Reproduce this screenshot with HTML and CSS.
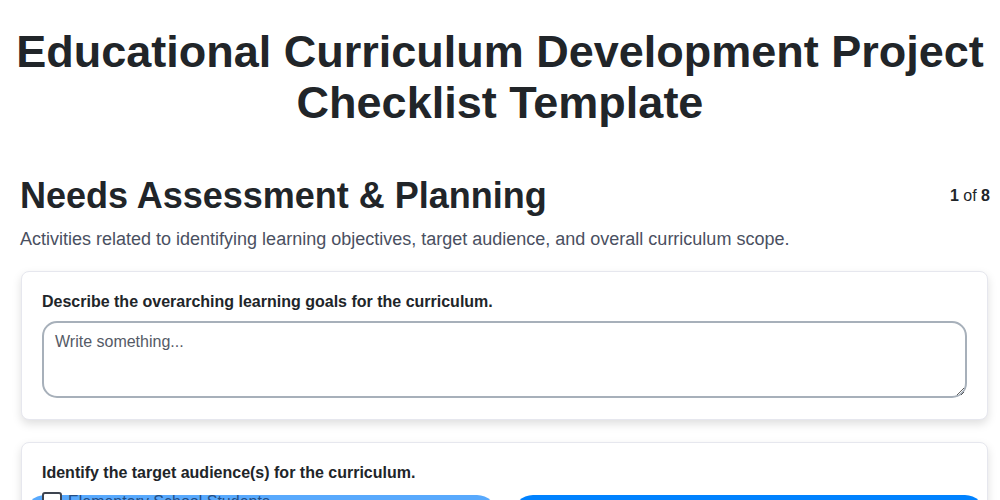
FILE: index.html
```html
<!DOCTYPE html>
<html>
<head>
	<meta charset="utf-8">
	<title>Educational Curriculum Development Project Checklist Template</title>
	<link rel="stylesheet" href="styles.css">
</head>
<body>
	<h1 class="title">Educational Curriculum Development Project Checklist Template</h1>
	<main class="page">
		<div class="section-head">
			<h2>Needs Assessment &amp; Planning</h2>
			<span class="counter"><b>1</b> of <b>8</b></span>
		</div>
		<p class="section-desc">Activities related to identifying learning objectives, target audience, and overall curriculum scope.</p>

		<div class="card">
			<label class="question">Describe the overarching learning goals for the curriculum.</label>
			<textarea placeholder="Write something..."></textarea>
		</div>

		<div class="card">
			<label class="question">Identify the target audience(s) for the curriculum.</label>
			<div class="options">
				<div class="option light">
					<label class="check"><span class="box"></span>Elementary School Students</label>
				</div>
				<div class="option dark"></div>
			</div>
		</div>
	</main>
</body>
</html>
```

FILE: styles.css
```css
body{
	margin: 0;
	background-color: #fff;
	color: #212529;
	font-family: "Liberation Sans", Arial, sans-serif;
}
.title{
	margin: 0;
	padding: 26px 10px 0;
	font-size: 45px;
	line-height: 51px;
	text-align: center;
	font-weight: bold;
}
.page{
	padding: 46px 10px 0 20px;
}
.section-head{
	display: flex;
	align-items: center;
	justify-content: space-between;
}
.section-head h2{
	margin: 0;
	font-size: 36px;
	line-height: 44px;
}
.counter{
	font-size: 16px;
	color: #212529;
}
.section-desc{
	margin: 11px 0 21px;
	font-size: 18px;
	color: #4a5061;
}
.card{
	margin: 0 2px 22px 1px;
	padding: 20px 20px 21px;
	background: #fff;
	border: 1px solid #e6e7ee;
	border-radius: 8px;
	box-shadow: 0 4px 10px rgba(0,0,0,.13);
}
.question{
	display: block;
	font-size: 16px;
	font-weight: bold;
	line-height: 19px;
}
textarea{
	display: block;
	box-sizing: border-box;
	width: 100%;
	height: 77px;
	margin-top: 10px;
	padding: 10px 11px;
	border: 2px solid #a7b0ba;
	border-radius: 15px;
	font-family: "Liberation Sans", Arial, sans-serif;
	font-size: 16px;
	color: #212529;
	resize: vertical;
	outline: none;
}
textarea::placeholder{
	color: #555a66;
}
.options{
	display: grid;
	grid-template-columns: 1fr 1fr;
	gap: 16px;
	margin: 13px -18px 0 -17px;
}
.option{
	height: 60px;
	border-radius: 20px;
}
.option.light{
	background-color: #58a9fd;
}
.option.dark{
	background-color: #0082ff;
}
.check{
	display: flex;
	align-items: center;
	gap: 6px;
	margin: -3px 0 0 17px;
	font-size: 16px;
	line-height: 20px;
	color: #234e85;
}
.box{
	box-sizing: border-box;
	width: 20px;
	height: 20px;
	border: 2px solid #3d4450;
	border-radius: 3px;
	background: #fff;
}
```
